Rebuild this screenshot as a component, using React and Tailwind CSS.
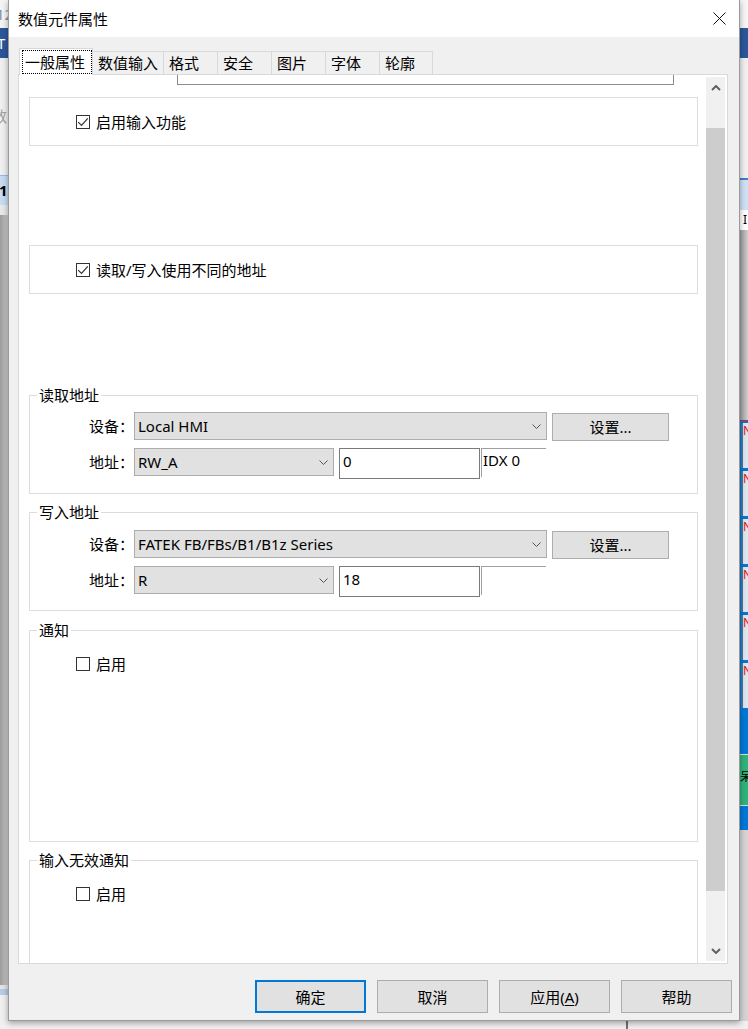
import React from 'react';

const Check = () => (
    <svg width="12" height="12" viewBox="0 0 12 12">
        <path d="M1.2 6.2 L4.5 9.5 L10.8 2.4" fill="none" stroke="#333" strokeWidth="1.2" />
    </svg>
);

const CheckBox = ({ checked, label }) => (
    <div className="flex items-center gap-[6px] leading-[20px]">
        <span className="w-[14px] h-[14px] border border-[#333] bg-white flex items-center justify-center">
            {checked && <Check />}
        </span>
        <span>{label}</span>
    </div>
);

const Chevron = () => (
    <svg width="9" height="5" viewBox="0 0 9 5">
        <path d="M0.5 0.5 L4.5 4.5 L8.5 0.5" fill="none" stroke="#555" />
    </svg>
);

const Combo = ({ value, className }) => (
    <div className={`h-[28px] bg-[#e1e1e1] border border-[#adadad] flex items-center justify-between pl-[3px] pr-[5px] ${className}`}>
        <span className="leading-[20px]">{value}</span>
        <Chevron />
    </div>
);

const Group = ({ title, className, children }) => (
    <div className={`relative ml-[10px] w-[669px] shrink-0 border border-[#dcdcdc] ${className}`}>
        <span className="absolute -top-[11px] left-[7px] bg-white px-[2px] leading-[20px]">{title}</span>
        {children}
    </div>
);

const AddrRows = ({ device, area, value, idx }) => (
    <div className="flex flex-col gap-[7px]">
        <div className="flex items-start">
            <span className="w-[104px] text-right leading-[28px]">设备：</span>
            <Combo value={device} className="w-[413px]" />
            <button className="ml-[5px] mt-px w-[117px] h-[28px] bg-[#e1e1e1] border border-[#adadad] leading-[20px]">设置...</button>
        </div>
        <div className="flex items-start">
            <span className="w-[104px] text-right leading-[28px]">地址：</span>
            <Combo value={area} className="w-[200px]" />
            <div className="ml-[5px] w-[141px] h-[31px] border border-[#7a7a7a] pl-[3px] leading-[25px]">{value}</div>
            <div className="ml-[1px] w-[65px] h-[29px] border-t border-l border-[#a0a0a0] pl-px leading-[22px]">{idx}</div>
        </div>
    </div>
);

const tabs = [
    { label: '数值输入', w: 'w-[71px]' },
    { label: '格式', w: 'w-[54px]' },
    { label: '安全', w: 'w-[54px]' },
    { label: '图片', w: 'w-[54px]' },
    { label: '字体', w: 'w-[54px]' },
    { label: '轮廓', w: 'w-[53px]' },
];

const Arrow = ({ up }) => (
    <svg width="10" height="6" viewBox="0 0 10 6">
        <path d={up ? 'M1 5 L5 1 L9 5' : 'M1 1 L5 5 L9 1'} fill="none" stroke="#606060" strokeWidth="2" />
    </svg>
);

const LeftStrip = () => (
    <div className="w-[8px] shrink-0 flex flex-col overflow-hidden whitespace-nowrap text-[15px]">
        <div className="h-[28px] bg-[#f4f4f4] text-[#7d8fa8] leading-[28px] -ml-[4px]">12</div>
        <div className="h-[30px] bg-[#2b579a] text-white leading-[30px] -ml-[3px]">T</div>
        <div className="h-[117px] bg-[#f0f0f0] text-[#a0a0a0] pt-[48px] leading-[20px] -ml-[8px]">数</div>
        <div className="h-[30px] bg-[#c6dcf2] border-t border-[#9fb8d6] font-bold leading-[28px] -ml-[1px]">12</div>
        <div className="h-[10px] bg-[#e8e8e8]" />
        <div className="flex-1 bg-gradient-to-r from-[#9a9a9a] to-[#cecece]" />
        <div className="h-[4px] bg-[#e4e4e4]" />
        <div className="h-[6px] bg-[#b4cde6]" />
        <div className="h-[26px] bg-[#f0f0f0]" />
    </div>
);

const RightStrip = () => (
    <div className="w-[8px] shrink-0 flex flex-col overflow-hidden whitespace-nowrap text-[15px]">
        <div className="h-[28px] bg-[#f6f6f6]" />
        <div className="h-[30px] bg-[#2b579a]" />
        <div className="h-[120px] bg-[#f0f0f0]" />
        <div className="h-[32px] bg-[#cfe1f5] border-t-2 border-[#3f7fc6]" />
        <div className="h-[20px] bg-white leading-[20px] pl-[3px] text-[12px]">I</div>
        <div className="h-[190px] bg-gradient-to-r from-[#9a9a9a] to-[#cecece]" />
        <div className="bg-[#0078d7] border-t border-[#e02020] flex flex-col gap-[3px] pt-[2px] pl-[1px]">
            {[0, 1, 2, 3, 4, 5].map((i) => (
                <div key={i} className="h-[45px] bg-[#dfe6ee] border-l-2 border-[#4a78a8] text-[#e02020] text-[12px] leading-[16px]">N</div>
            ))}
        </div>
        <div className="h-[46px] bg-[#0078d7]" />
        <div className="h-[52px] bg-[#2fb37c] border-y border-[#e0e0e0] text-[12px] leading-[16px] pt-[14px]">呆</div>
        <div className="h-[24px] bg-[#0078d7]" />
        <div className="flex-1 bg-[#d4d4d4]" />
    </div>
);

const App = () => {
    return (
        <div className="w-[748px] h-[1029px] flex flex-col overflow-hidden bg-[#f0f0f0] text-[15px] text-black font-[family-name:Noto_Sans,Noto_Sans_CJK_SC,sans-serif]">
            <div className="flex h-[1021px] shrink-0">
                <LeftStrip />
                <div className="w-[732px] shrink-0 flex flex-col border-x border-b border-[#9a9a9a] bg-[#f0f0f0] shadow-[0_2px_6px_rgba(0,0,0,0.35)] relative z-10">
                    {/* title bar */}
                    <div className="h-[37px] shrink-0 bg-white flex items-center justify-between pl-[9px]">
                        <span className="leading-[20px]">数值元件属性</span>
                        <div className="w-[40px] h-[37px] flex items-center justify-center">
                            <svg width="13" height="13" viewBox="0 0 13 13">
                                <path d="M0.5 0.5 L12.5 12.5 M12.5 0.5 L0.5 12.5" stroke="#111" strokeWidth="1" />
                            </svg>
                        </div>
                    </div>

                    <div className="flex-1 flex flex-col pl-[9px] pt-[11px] pb-[7px]">
                        {/* tabs */}
                        <div className="flex items-start h-[27px] -mb-px pl-px">
                            <div className="relative z-10 w-[74px] h-[27px] bg-white border-l border-t border-r border-[#d9d9d9] pl-px pr-0 pt-px pb-px">
                                <div className="ml-[1px] h-[24px] border border-dotted border-black pl-[2px] leading-[22px]">一般属性</div>
                            </div>
                            {tabs.map((t) => (
                                <div key={t.label} className={`${t.w} mt-[3px] h-[24px] bg-[#f0f0f0] border-t border-r border-[#d9d9d9] pl-[5px] leading-[22px]`}>
                                    {t.label}
                                </div>
                            ))}
                        </div>

                        {/* panel */}
                        <div className="w-[710px] h-[890px] shrink-0 border border-[#d9d9d9] bg-white flex">
                            <div className="w-[687px] h-full overflow-hidden flex flex-col items-start">
                                <div className="ml-[158px] w-[497px] h-[10px] shrink-0 border-x border-b border-[#8c8c8c]" />

                                <div className="mt-[12px] ml-[10px] w-[669px] h-[49px] shrink-0 border border-[#dcdcdc] flex items-center pl-[46px]">
                                    <CheckBox checked label="启用输入功能" />
                                </div>

                                <div className="mt-[99px] ml-[10px] w-[669px] h-[49px] shrink-0 border border-[#dcdcdc] flex items-center pl-[46px]">
                                    <CheckBox checked label="读取/写入使用不同的地址" />
                                </div>

                                <Group title="读取地址" className="mt-[101px] h-[99px] pt-[16px]">
                                    <AddrRows device="Local HMI" area="RW_A" value="0" idx="IDX 0" />
                                </Group>

                                <Group title="写入地址" className="mt-[18px] h-[99px] pt-[17px]">
                                    <AddrRows device="FATEK FB/FBs/B1/B1z Series" area="R" value="18" idx="" />
                                </Group>

                                <Group title="通知" className="mt-[19px] h-[212px] pt-[23px] pl-[46px]">
                                    <CheckBox label="启用" />
                                </Group>

                                <Group title="输入无效通知" className="mt-[18px] h-[200px] pt-[23px] pl-[46px]">
                                    <CheckBox label="启用" />
                                </Group>
                            </div>

                            {/* scrollbar */}
                            <div className="my-[2px] w-[19px] bg-[#f0f0f0] flex flex-col">
                                <div className="h-[22px] flex items-center justify-center"><Arrow up /></div>
                                <div className="h-[29px]" />
                                <div className="h-[763px] bg-[#cdcdcd]" />
                                <div className="flex-1" />
                                <div className="h-[20px] flex items-center justify-center"><Arrow /></div>
                            </div>
                        </div>

                        {/* buttons */}
                        <div className="mt-[16px] flex justify-end gap-[11px] pr-[7px]">
                            <button className="w-[111px] h-[33px] bg-[#e1e1e1] border-2 border-[#0078d7] leading-[20px]">确定</button>
                            <button className="w-[111px] h-[33px] bg-[#e1e1e1] border border-[#adadad] leading-[20px]">取消</button>
                            <button className="w-[111px] h-[33px] bg-[#e1e1e1] border border-[#adadad] leading-[20px]">
                                应用(<span className="underline underline-offset-2">A</span>)
                            </button>
                            <button className="w-[111px] h-[33px] bg-[#e1e1e1] border border-[#adadad] leading-[20px]">帮助</button>
                        </div>
                    </div>
                </div>
                <RightStrip />
            </div>
            <div className="h-[8px] shrink-0 flex bg-[#f0f0f0]">
                <div className="w-[626px] h-full" />
                <div className="w-[2px] h-full bg-[#707070]" />
            </div>
        </div>
    );
};

export default App;
